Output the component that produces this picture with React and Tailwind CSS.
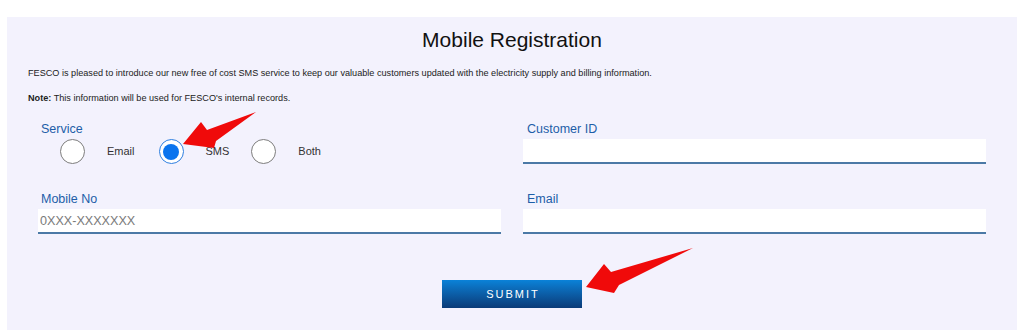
import React from 'react';

const font = { fontFamily: '"Liberation Sans", Arial, sans-serif' };

const Radio = ({ label, checked, className = '' }) => (
  <label className={`flex items-center ${className}`}>
    {checked ? (
      <span className="w-[25px] h-[25px] rounded-full border border-[#2f7fe0] bg-white flex items-center justify-center">
        <span className="w-[16px] h-[16px] rounded-full bg-[#0a74ee]" />
      </span>
    ) : (
      <span className="w-[25px] h-[25px] rounded-full border border-[#7d7d7d] bg-white" />
    )}
    <span className="ml-[22px] text-[11px] text-[#333]">{label}</span>
  </label>
);

const Field = ({ label, placeholder }) => (
  <div>
    <p className="text-[12.5px] leading-[16px] text-[#1d5ea8]">{label}</p>
    <input
      placeholder={placeholder}
      className="mt-[2px] w-full h-[25px] bg-white border-b-2 border-[#4b79a6] px-[2px] text-[12.6px] text-[#333] placeholder:text-[#7a7a7a] outline-none"
      style={font}
    />
  </div>
);

// red annotation arrows drawn over the form
const Arrow = ({ points }) => (
  <polygon points={points} fill="#f00a0a" />
);

export default function App() {
  return (
    <div className="w-[1024px] h-[335px] bg-white relative overflow-hidden" style={font}>
      <div className="mx-[7px] mt-[17px] bg-[#f3f2fd] px-[21px] pt-[11px] pb-[22px]">
        <h1 className="text-center text-[21px] leading-[24px] text-[#111]">Mobile Registration</h1>
        <p className="mt-[15px] text-[9.15px] leading-[12px] text-[#222]">
          FESCO is pleased to introduce our new free of cost SMS service to keep our valuable customers updated with the electricity supply and billing information.
        </p>
        <p className="mt-[13px] text-[9.15px] leading-[12px] text-[#222]">
          <span className="font-bold">Note:</span> This information will be used for FESCO's internal records.
        </p>

        <div className="px-[10px] mt-[17px] grid grid-cols-2 gap-x-[22px] gap-y-[27px]">
          <div>
            <p className="pl-[3px] text-[12.5px] leading-[16px] text-[#1d5ea8]">Service</p>
            <div className="mt-[2px] flex items-center pl-[22px]">
              <Radio label="Email" />
              <Radio label="SMS" checked className="ml-[24px]" />
              <Radio label="Both" className="ml-[22px]" />
            </div>
          </div>
          <div className="[&_p]:pl-[4px]">
            <Field label="Customer ID" />
          </div>
          <div className="[&_p]:pl-[3px]">
            <Field label="Mobile No" placeholder="0XXX-XXXXXXX" />
          </div>
          <div className="[&_p]:pl-[4px]">
            <Field label="Email" />
          </div>
        </div>

        <div className="mt-[46px] flex justify-center">
          <button className="w-[140px] h-[28px] bg-gradient-to-b from-[#0a82d8] to-[#0a3b78] text-white text-[11px] tracking-[2px] pl-[2px]">
            SUBMIT
          </button>
        </div>
      </div>

      <svg className="absolute inset-0 pointer-events-none" width="1024" height="335" viewBox="0 0 1024 335">
        <Arrow points="183,144 201,122 207,130 256,112 216,141 214,148" />
        <Arrow points="586,287 604,264 611,272 693,248 619,285 614,293" />
      </svg>
    </div>
  );
}
